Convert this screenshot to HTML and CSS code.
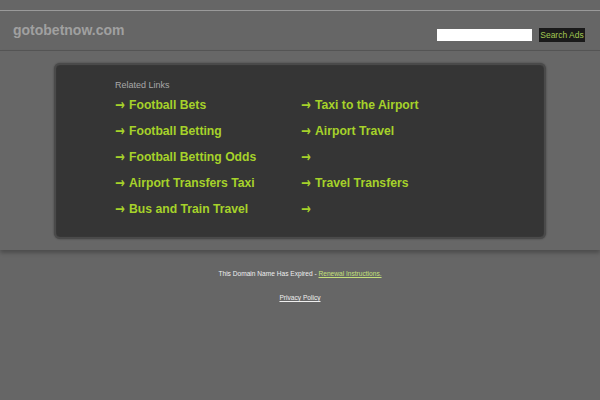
FILE: index.html
```html
<!DOCTYPE html>
<html>
<head>
<meta charset="utf-8">
<link rel="stylesheet" href="styles.css">
</head>
<body>
<div class="top"></div>
<header class="header">
  <div class="logo">gotobetnow.com</div>
  <form class="search">
    <input class="search-input" type="text">
    <button class="search-btn" type="button">Search Ads</button>
  </form>
</header>
<main class="band">
  <div class="box">
    <div class="related">Related Links</div>
    <div class="links">
      <a class="link"><span class="arrow">→</span>Football Bets</a>
      <a class="link"><span class="arrow">→</span>Taxi to the Airport</a>
      <a class="link"><span class="arrow">→</span>Football Betting</a>
      <a class="link"><span class="arrow">→</span>Airport Travel</a>
      <a class="link"><span class="arrow">→</span>Football Betting Odds</a>
      <a class="link"><span class="arrow">→</span></a>
      <a class="link"><span class="arrow">→</span>Airport Transfers Taxi</a>
      <a class="link"><span class="arrow">→</span>Travel Transfers</a>
      <a class="link"><span class="arrow">→</span>Bus and Train Travel</a>
      <a class="link"><span class="arrow">→</span></a>
    </div>
  </div>
</main>
<footer class="footer">
  <p class="expired">This Domain Name Has Expired - <a class="renew">Renewal Instructions.</a></p>
  <p class="privacy"><a class="privacy-link">Privacy Policy</a></p>
</footer>
</body>
</html>
```
FILE: styles.css
```css
html, body {
  margin: 0;
  padding: 0;
  background: #666666;
  font-family: "Liberation Sans", Arial, sans-serif;
}
.top {
  height: 10px;
  background: #666666;
  border-bottom: 1px solid #9a9a9a;
}
.header {
  height: 39px;
  border-bottom: 1px solid #555555;
  display: flex;
  align-items: center;
  justify-content: space-between;
  padding: 0 15px 0 13px;
}
.logo {
  color: #a0a0a0;
  font-weight: bold;
  font-size: 14px;
  margin-top: -1px;
}
.search {
  display: flex;
  align-items: center;
  gap: 7px;
  margin: 8px 0 0;
}
.search-input {
  width: 95px;
  height: 12px;
  border: none;
  padding: 0;
  margin: 0;
  background: #ffffff;
}
.search-btn {
  width: 46px;
  height: 14px;
  background: #1a1a1a;
  color: #a3c852;
  border: none;
  font-family: "Liberation Sans", Arial, sans-serif;
  font-size: 8.5px;
  padding: 0;
  margin: 0;
  line-height: 14px;
  text-align: center;
}
.band {
  display: block;
  padding: 12px 0 11px;
  background: #676767;
  box-shadow: 0 3px 4px rgba(0,0,0,0.25);
}
.box {
  width: 488px;
  height: 172px;
  margin: 0 auto;
  background: #353535;
  border: 2px solid #4a4a4a;
  border-radius: 6px;
  box-shadow: 0 0 2px rgba(0,0,0,0.4), inset 0 0 1px #555;
}
.related {
  color: #a8a8a8;
  font-size: 9px;
  padding: 14px 0 0 59px;
  line-height: 12px;
}
.links {
  display: grid;
  grid-template-columns: 186px 200px;
  padding-left: 59px;
  margin-top: 6px;
}
.link {
  display: flex;
  align-items: center;
  color: #a6d22a;
  font-weight: bold;
  font-size: 12.2px;
  height: 16px;
  line-height: 16px;
  margin-bottom: 10px;
  white-space: pre;
}
.arrow {
  display: inline-block;
  width: 14px;
  flex: none;
  font-family: "DejaVu Sans", sans-serif;
  font-weight: bold;
  font-size: 15px;
  line-height: 16px;
  transform: scaleX(0.78);
  transform-origin: left center;
}
.footer {
  text-align: center;
  font-size: 6.6px;
  color: #eeeeee;
  padding-top: 19px;
}
.expired {
  margin: 0;
  line-height: 10px;
}
.renew {
  color: #c4e07a;
  text-decoration: underline;
}
.privacy {
  margin: 14px 0 0;
  line-height: 10px;
}
.privacy-link {
  color: #eeeeee;
  text-decoration: underline;
}
```
